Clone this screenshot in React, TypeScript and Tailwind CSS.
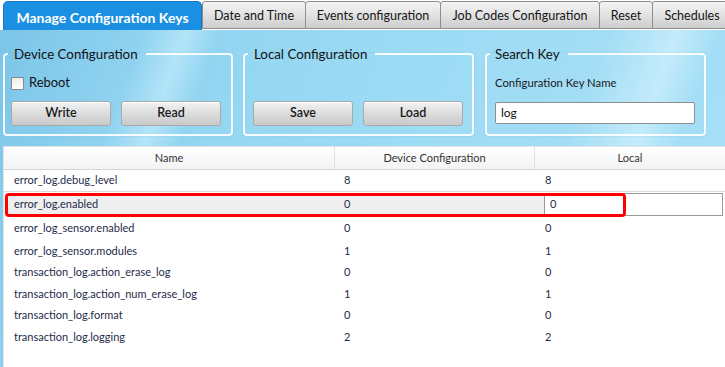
import React from "react";

const tabs = [
  { label: "Date and Time", w: 104 },
  { label: "Events configuration", w: 136 },
  { label: "Job Codes Configuration", w: 160 },
  { label: "Reset", w: 54 },
  { label: "Schedules", w: 80 },
];

const rows: { name: string; dev: string; local: string }[] = [
  { name: "error_log_sensor.enabled", dev: "0", local: "0" },
  { name: "error_log_sensor.modules", dev: "1", local: "1" },
  { name: "transaction_log.action_erase_log", dev: "0", local: "0" },
  { name: "transaction_log.action_num_erase_log", dev: "1", local: "1" },
  { name: "transaction_log.format", dev: "0", local: "0" },
  { name: "transaction_log.logging", dev: "2", local: "2" },
];

function Btn({ label }: { label: string }) {
  return (
    <button className="w-[100px] h-[25px] rounded-[3px] border border-[#a9a9a9] bg-[linear-gradient(#f3f3f3,#dcdcdc_50%,#c9c9c9)] text-[12.5px] font-semibold text-[#1a1a1a] shadow-[inset_0_1px_0_#fff]">
      {label}
    </button>
  );
}

function Row({ name, dev, local }: { name: string; dev: string; local: string }) {
  return (
    <>
      <div className="w-[331px] pl-[10px]">{name}</div>
      <div className="w-[200px] pl-[9px]">{dev}</div>
      <div className="pl-[10px]">{local}</div>
    </>
  );
}

export default function App() {
  const font = { fontFamily: 'Lato, "Open Sans", sans-serif' };
  return (
    <div className="w-[725px] h-[367px] overflow-hidden bg-white flex flex-col" style={font}>
      {/* Tab bar */}
      <div className="h-[30px] flex items-end pl-[3px] bg-white shrink-0 overflow-hidden">
        <div className="w-[199px] shrink-0 h-[29px] pt-[2px] rounded-t-[5px] bg-[#1b8fe1] border border-b-0 border-[#1479c4] flex items-center justify-center text-white font-bold text-[14px] whitespace-nowrap">
          Manage Configuration Keys
        </div>
        <div className="w-[1px] shrink-0" />
        {tabs.map((t) => (
          <div
            key={t.label}
            style={{ width: t.w }}
            className="h-[28px] mb-[1px] pt-[2px] rounded-t-[3px] border border-[#8e8e8e] bg-[linear-gradient(#f4f4f4,#e2e2e2_50%,#cdcdcd)] flex items-center justify-center text-[12.5px] text-[#151515] shrink-0 -ml-[1px] first:ml-0 whitespace-nowrap"
          >
            {t.label}
          </div>
        ))}
      </div>

      {/* Content */}
      <div className="flex-1 flex flex-col bg-[linear-gradient(110deg,#7cc5e8_0%,#8fd2f0_17%,#b3e4f8_22%,#93d5f1_26%,#9bdaf4_45%,#a3ddf5_72%,#c3ebfb_80%,#a4def6_85%,#a8e0f6_100%)]">
        <div className="h-[116px] flex items-start pt-[15px] pl-[3px] shrink-0">
          <fieldset className="w-[230px] h-[91px] border-2 border-white/90 rounded-[4px] px-[6px] shadow-[0_0_1px_#6ab]">
            <legend className="-ml-[3px] pl-[6px] pr-[8px] text-[13.3px] leading-[18px] text-[#111]">
              Device Configuration
            </legend>
            <div className="flex items-center h-[16px] mt-[12px] gap-[5px]">
              <div className="w-[13px] h-[13px] border border-[#8a8a8a] bg-[linear-gradient(#ececec,#ffffff)] rounded-[1px]" />
              <span className="text-[12.9px] text-[#111]">Reboot</span>
            </div>
            <div className="flex gap-[10px] mt-[10px]">
              <Btn label="Write" />
              <Btn label="Read" />
            </div>
          </fieldset>

          <fieldset className="ml-[10px] w-[231px] h-[91px] border-2 border-white/90 rounded-[4px] px-[8px] shadow-[0_0_1px_#6ab]">
            <legend className="-ml-[5px] pl-[6px] pr-[8px] text-[13.3px] leading-[18px] text-[#111]">
              Local Configuration
            </legend>
            <div className="flex gap-[10px] mt-[38px]">
              <Btn label="Save" />
              <Btn label="Load" />
            </div>
          </fieldset>

          <fieldset className="ml-[11px] w-[221px] h-[91px] border-2 border-white/90 rounded-[4px] px-[8px] shadow-[0_0_1px_#6ab]">
            <legend className="-ml-[5px] pl-[5px] pr-[8px] text-[13.3px] leading-[18px] text-[#111]">
              Search Key
            </legend>
            <div className="mt-[12px] h-[16px] flex items-center text-[11.3px] text-[#1a1a1a]">
              Configuration Key Name
            </div>
            <div className="mt-[11px] w-[200px] h-[22px] bg-white border border-[#8f8f8f] rounded-[2px] flex items-center pl-[5px] text-[12px] text-[#111]">
              log
            </div>
          </fieldset>
        </div>

        {/* Table */}
        <div className="flex-1 ml-[3px] bg-white border-t border-l border-[#e3e3e3] relative text-[11px] text-[#1e2b4a]">
          <div className="flex h-[23px] border-b border-[#d5d5d5] bg-[linear-gradient(#ffffff,#f3f3f3)] text-[11px] text-[#333]">
            <div className="w-[331px] flex items-center justify-center border-r border-[#e2e2e2]">Name</div>
            <div className="w-[200px] flex items-center justify-center border-r border-[#e2e2e2]">Device Configuration</div>
            <div className="w-[190px] flex items-center justify-center">Local</div>
          </div>

          <div className="flex h-[21px] items-center">
            <Row name="error_log.debug_level" dev="8" local="8" />
          </div>

          <div className="flex h-[26px] border-t border-[#dadada] pt-[1px]">
            <div className="w-[540px] h-[23px] bg-[#efefef] flex items-center">
              <div className="w-[340px] pl-[10px]">error_log.enabled</div>
              <div>0</div>
            </div>
            <div className="w-[179px] h-[23px] border border-[#9a9a9a] bg-white flex items-center pl-[5px]">0</div>
          </div>

          <div className="flex h-[23px] items-center">
            <Row {...rows[0]} />
          </div>

          {rows.slice(1).map((r) => (
            <div key={r.name} className="flex h-[21.6px] items-center">
              <Row {...r} />
            </div>
          ))}

          <div className="absolute left-[1px] top-[46px] w-[621px] h-[24px] border-[3px] border-[#ff0000] rounded-[4px]" />
        </div>
      </div>
    </div>
  );
}
